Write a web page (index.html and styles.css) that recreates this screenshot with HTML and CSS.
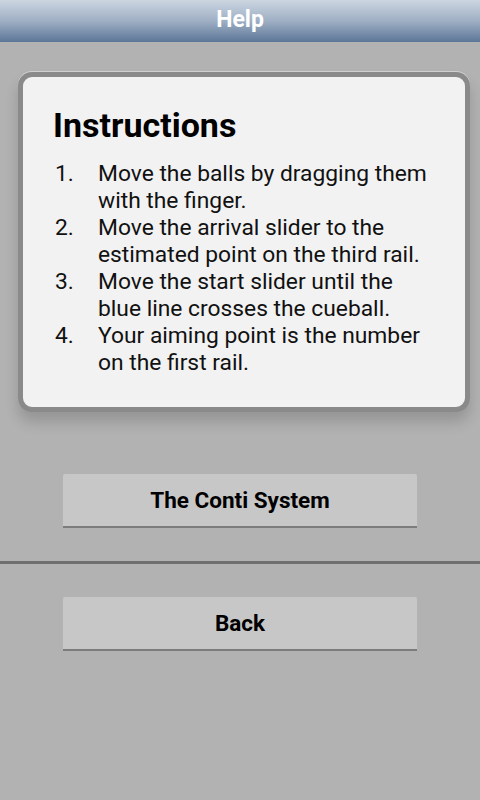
FILE: index.html
```html
<!DOCTYPE html>
<html>
<head>
<meta charset="utf-8">
<link rel="stylesheet" href="styles.css">
</head>
<body>
<header class="titlebar">Help</header>
<main class="content">
  <section class="card">
    <h1 class="card-title">Instructions</h1>
    <ol class="steps">
      <li><span class="num">1.</span><span class="txt">Move the balls by dragging them with the finger.</span></li>
      <li><span class="num">2.</span><span class="txt">Move the arrival slider to the estimated point on the third rail.</span></li>
      <li><span class="num">3.</span><span class="txt">Move the start slider until the blue line crosses the cueball.</span></li>
      <li><span class="num">4.</span><span class="txt">Your aiming point is the number on the first rail.</span></li>
    </ol>
  </section>
  <div class="btn-wrap top">
    <button class="btn">The Conti System</button>
  </div>
  <hr class="sep">
  <div class="btn-wrap bottom">
    <button class="btn">Back</button>
  </div>
</main>
</body>
</html>
```
FILE: styles.css
```css
html, body {
  margin: 0;
  padding: 0;
  width: 480px;
  height: 800px;
  background: #b2b2b2;
  font-family: Roboto, "Noto Sans", sans-serif;
  overflow: hidden;
}
.titlebar {
  height: 42px;
  background: linear-gradient(#ccd6e1, #9fafc4 50%, #5c7698);
  color: #ffffff;
  font-weight: bold;
  font-size: 23px;
  line-height: 40px;
  text-align: center;
}
.content {
  display: flex;
  flex-direction: column;
}
.card {
  margin: 30px 10px 0 18px;
  height: 330px;
  background: #f2f2f2;
  border: 5px solid #8a8a8a;
  border-radius: 14px;
  box-shadow: 0 -1px 0 #d0d0d0, 0 10px 14px rgba(0,0,0,0.16);
  padding: 0 0 0 30px;
  box-sizing: content-box;
  width: 412px;
}
.card-title {
  margin: 27px 0 0 0;
  font-size: 34px;
  font-weight: bold;
  line-height: 42px;
  color: #000;
}
.steps {
  list-style: none;
  margin: 14px 0 0 0;
  padding: 0;
}
.steps li {
  display: flex;
  font-size: 22.8px;
  line-height: 27px;
  color: #111;
}
.num {
  width: 43px;
  padding-left: 2px;
  flex: none;
}
.txt {
  width: 335px;
}
.btn-wrap {
  display: flex;
  justify-content: flex-start;
  padding-left: 63px;
}
.btn-wrap.top { margin-top: 62px; }
.btn-wrap.bottom { margin-top: 33px; }
.btn {
  width: 354px;
  height: 54px;
  border: none;
  border-bottom: 2px solid #7c7c7c;
  border-radius: 2px 2px 0 0;
  background: #c7c7c7;
  font-family: Roboto, "Noto Sans", sans-serif;
  font-weight: bold;
  font-size: 22.5px;
  color: #000;
  padding: 0;
  box-sizing: border-box;
}
.sep {
  margin: 33px 0 0 0;
  height: 3px;
  border: none;
  background: #6f6f6f;
}
```
